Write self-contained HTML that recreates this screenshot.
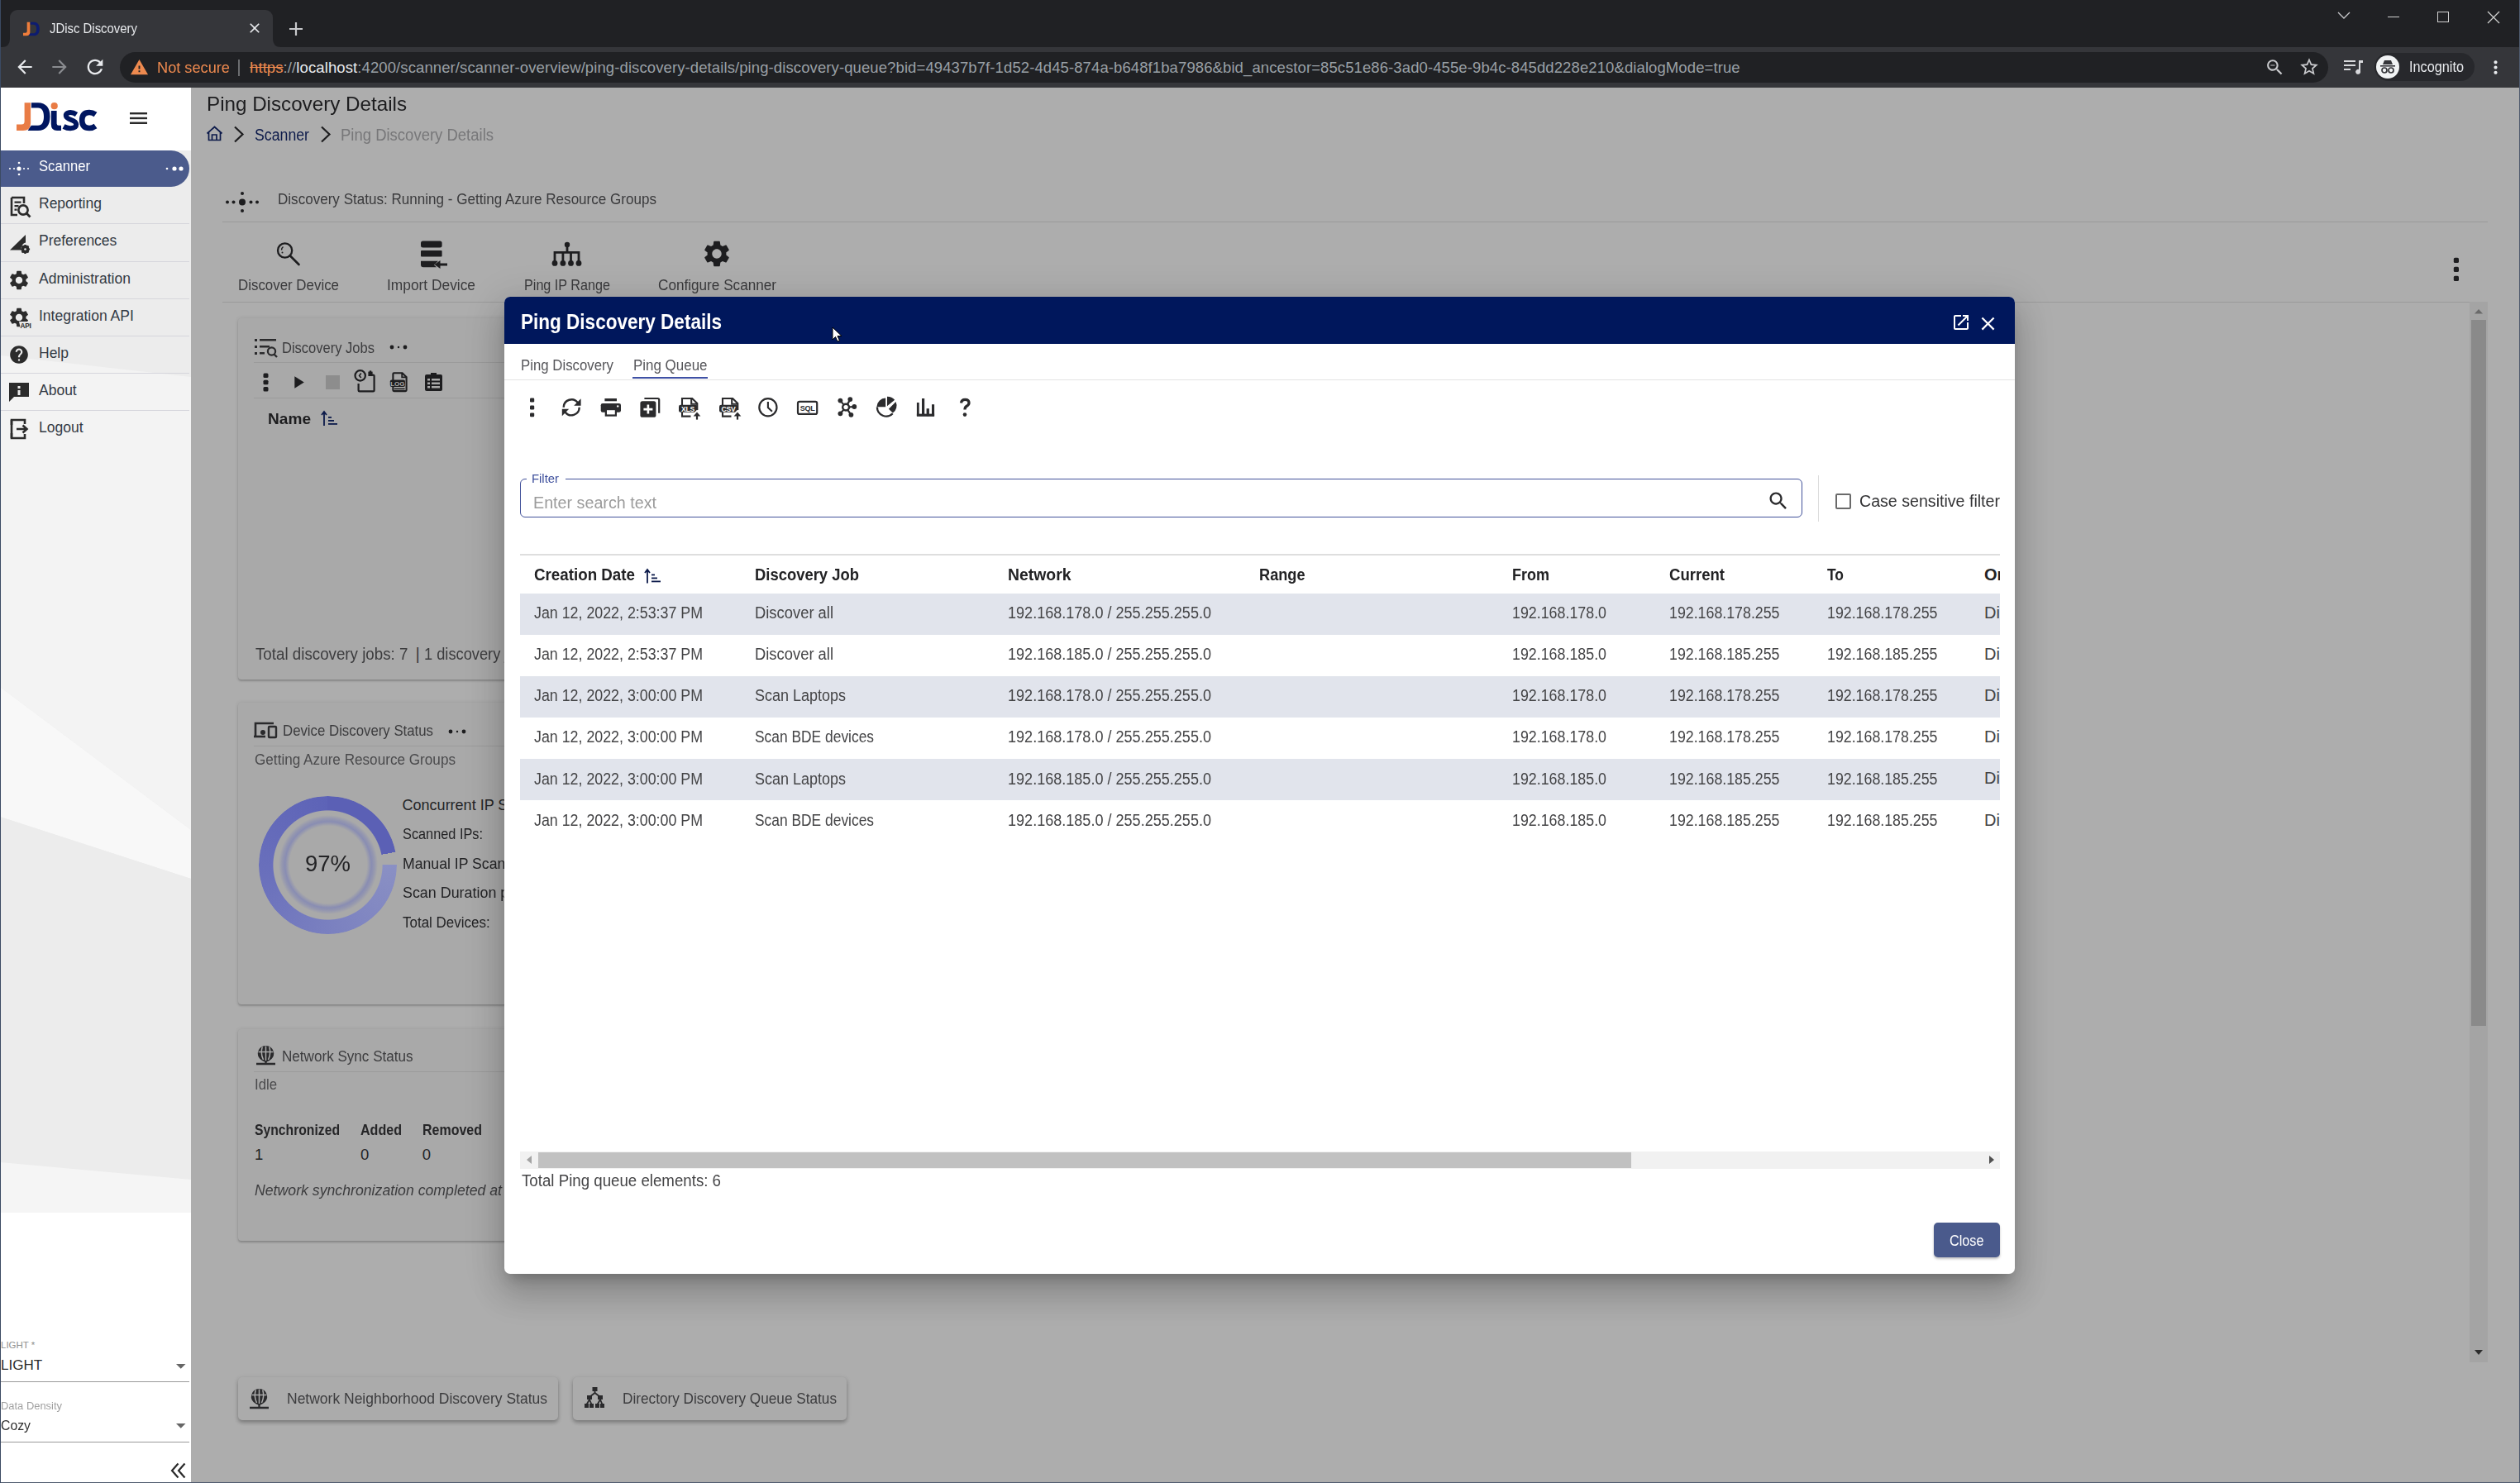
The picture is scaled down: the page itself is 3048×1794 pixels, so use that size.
<!DOCTYPE html>
<html><head><meta charset="utf-8"><title>JDisc Discovery</title>
<style>
html,body{margin:0;padding:0;}
body{width:3048px;height:1794px;overflow:hidden;position:relative;font-family:"Liberation Sans",sans-serif;background:#acacac;}
.t{position:absolute;white-space:nowrap;line-height:1;}
.a{position:absolute;}
svg.a{overflow:visible;}
</style></head><body>
<div class=a style="left:0px;top:0px;width:3048px;height:57px;background:#202124;"></div>
<div class=a style="left:0px;top:57px;width:3048px;height:49px;background:#35363a;"></div>
<div class=a style="left:12px;top:12px;width:318px;height:46px;background:#35363a;border-radius:9px 9px 0 0;"></div>
<svg class=a style="left:2px;top:47px" width="10" height="10"><path d="M0 10 Q10 10 10 0 V10Z" fill="#35363a"/></svg>
<svg class=a style="left:330px;top:47px" width="10" height="10"><path d="M10 10 Q0 10 0 0 V10Z" fill="#35363a"/></svg>
<svg class=a style="left:27px;top:25px" width="22" height="20" viewBox="18 122 45 38"><path fill="#ee7d3b" d="M29.6 124.3H37.1V149Q37.1 158 28 158H20V150.5H26Q29.6 150.5 29.6 147Z"/><path fill="#0d1c70" d="M37.900 124.3H46C56 124.3 60.5 131 60.5 141C60.5 151 56 158 46 158H33.6Q36 154 37.9 151.8H46C51 151.8 53 147 53 141C53 135 51 130.5 46 130.5H37.9Z"/></svg>
<span class=t style="left:60.0px;top:26.1px;font-size:17px;color:#e8eaed;transform:scaleX(0.8767);transform-origin:0 0;">JDisc Discovery</span>
<svg class=a style="left:298px;top:24px;" width="20" height="20" viewBox="0 0 24 24"><path fill="#e8eaed" d="M19 6.41L17.59 5 12 10.59 6.41 5 5 6.41 10.59 12 5 17.59 6.41 19 12 13.41 17.59 19 19 17.59 13.41 12z"/></svg>
<svg class=a style="left:348px;top:25px;" width="20" height="20" viewBox="0 0 20 20"><path d="M10 2V18M2 10H18" stroke="#c8c9cc" stroke-width="2.2"/></svg>
<svg class=a style="left:2826px;top:12px;" width="18" height="14" viewBox="0 0 18 14"><path d="M2 3 L9 10 L16 3" stroke="#c8c9cc" stroke-width="1.3" fill="none"/></svg>
<div class=a style="left:2888px;top:20px;width:14px;height:1px;background:#d0d0d0;"></div>
<div class=a style="left:2948px;top:14px;width:14px;height:13px;border:1.2px solid #d0d0d0;box-sizing:border-box;"></div>
<svg class=a style="left:3009px;top:14px;" width="14" height="14" viewBox="0 0 14 14"><path d="M0 0L14 14M14 0L0 14" stroke="#d0d0d0" stroke-width="1.3"/></svg>
<svg class=a style="left:17px;top:68px;" width="26" height="26" viewBox="0 0 24 24"><path fill="#e8eaed" d="M20 11H7.830l5.59-5.59L12 4l-8 8 8 8 1.41-1.41L7.83 13H20v-2z"/></svg>
<svg class=a style="left:59px;top:68px;" width="26" height="26" viewBox="0 0 24 24"><path fill="#8a8c90" d="M12 4l-1.41 1.41L16.17 11H4v2h12.17l-5.58 5.59L12 20l8-8z"/></svg>
<svg class=a style="left:101px;top:67px;" width="28" height="28" viewBox="0 0 24 24"><path fill="#e8eaed" d="M17.65 6.35C16.2 4.9 14.21 4 12 4c-4.42 0-7.99 3.58-7.990 8s3.57 8 7.99 8c3.73 0 6.84-2.55 7.73-6h-2.08c-.82 2.33-3.04 4-5.65 4-3.31 0-6-2.69-6-6s2.69-6 6-6c1.66 0 3.14.69 4.22 1.78L13 11h7V4l-2.35 2.35z"/></svg>
<div class=a style="left:145px;top:63px;width:2671px;height:37px;background:#202124;border-radius:19px;"></div>
<svg class=a style="left:157px;top:70px;" width="23" height="23" viewBox="0 0 24 24"><path fill="#ee8a4f" d="M1 21h22L12 2 1 21zm12-3h-2v-2h2v2zm0-4h-2v-4h2v4z"/></svg>
<span class=t style="left:189.5px;top:72.6px;font-size:18.5px;color:#ee8a4f;transform:scaleX(0.9836);transform-origin:0 0;">Not secure</span>
<div class=a style="left:288px;top:72px;width:1.5px;height:20px;background:#6b6d70;"></div>
<span class=t style="left:302.0px;top:72.6px;font-size:18.5px;color:#9aa0a6;letter-spacing:0.10px;"><span style="color:#ee8a4f;text-decoration:line-through">https</span><span style="color:#9aa0a6">://</span><span style="color:#e8eaed">localhost</span><span style="color:#9aa0a6">:4200/scanner/scanner-overview/ping-discovery-details/ping-discovery-queue?bid=49437b7f-1d52-4d45-874a-b648f1ba7986&amp;bid_ancestor=85c51e86-3ad0-455e-9b4c-845dd228e210&amp;dialogMode=true</span></span>
<svg class=a style="left:2739px;top:69px;" width="25" height="25" viewBox="0 0 24 24"><path fill="#c8c9cc" d="M15.5 14h-.79l-.28-.27C15.41 12.59 16 11.11 16 9.5 16 5.91 13.09 3 9.5 3S3 5.91 3 9.5 5.91 16 9.5 16c1.61 0 3.09-.59 4.23-1.57l.27.28v.79l5 4.99L20.49 19l-4.99-5zm-6 0C7.01 14 5 11.99 5 9.5S7.01 5 9.5 5 14 7.01 14 9.5 11.99 14 9.5 14zM7 9h5v1H7z"/></svg>
<svg class=a style="left:2780px;top:68px;" width="26" height="26" viewBox="0 0 24 24"><path fill="#c8c9cc" d="M22 9.24l-7.19-.62L12 2 9.19 8.63 2 9.24l5.46 4.73L5.82 21 12 17.27 18.18 21l-1.63-7.03L22 9.24zM12 15.4l-3.76 2.27 1-4.28-3.32-2.88 4.38-.38L12 6.1l1.71 4.04 4.38.38-3.32 2.88 1 4.28L12 15.4z"/></svg>
<svg class=a style="left:2833px;top:71px;" width="26" height="20" viewBox="0 0 26 20"><path d="M2 3H16M2 8H16M2 13H10" stroke="#d8d9dc" stroke-width="2"/><path d="M20 2H25V5H22V15A3 3 0 1 1 20 13Z" fill="#d8d9dc"/></svg>
<div class=a style="left:2872px;top:64px;width:121px;height:34px;background:#27282c;border-radius:17px;"></div>
<div class=a style="left:2874px;top:67px;width:28px;height:28px;background:#f1f3f4;border-radius:50%;"></div>
<svg class=a style="left:2876px;top:70px;" width="24" height="22" viewBox="0 0 24 22"><path d="M6 8H18L16 3H8Z" fill="#35363a"/><rect x="3" y="9" width="18" height="1.6" fill="#35363a"/><circle cx="8" cy="15" r="3" fill="none" stroke="#35363a" stroke-width="1.7"/><circle cx="16" cy="15" r="3" fill="none" stroke="#35363a" stroke-width="1.7"/></svg>
<span class=t style="left:2914.0px;top:71.8px;font-size:18px;color:#e8eaed;transform:scaleX(0.9033);transform-origin:0 0;">Incognito</span>
<svg class=a style="left:3006px;top:69px;" width="25" height="25" viewBox="0 0 24 24"><path fill="#e8eaed" d="M12 8c1.1 0 2-.9 2-2s-.9-2-2-2-2 .9-2 2 .9 2 2 2zm0 2c-1.1 0-2 .9-2 2s.9 2 2 2 2-.9 2-2-.9-2-2-2zm0 6c-1.1 0-2 .9-2 2s.9 2 2 2 2-.9 2-2-.9-2-2-2z"/></svg>
<div class=a style="left:0px;top:106px;width:231px;height:1688px;background:#ffffff;"></div>
<svg class=a style="left:0;top:182px" width="231" height="1285" viewBox="0 182 231 1285"><rect x="0" y="182" width="231" height="1285" fill="#ececec"/><polygon points="0,430 231,456 231,1004 0,831" fill="#f3f3f3"/><polygon points="0,831 231,1004 231,1063 0,988" fill="#f8f8f8"/><polygon points="0,988 231,1063 231,1427 0,1406" fill="#ececec"/><polygon points="0,1406 231,1427 231,1467 0,1467" fill="#f5f5f5"/></svg>
<div class=a style="left:0px;top:106px;width:1px;height:1688px;background:#3b4a63;"></div>
<svg class=a style="left:0;top:106px" width="231" height="76" viewBox="0 106 231 76"><path fill="#e97c45" d="M29.6 124.3H37.1V149Q37.1 158 28 158H20V150.5H26Q29.6 150.5 29.6 147Z"/><path fill="#001660" d="M37.9 124.3H46C56 124.3 60.5 131 60.5 141C60.5 151 56 158 46 158H33.6Q36 154 37.9 151.8H46C51 151.8 53 147 53 141C53 135 51 130.5 46 130.5H37.9Z"/><path fill="#001660" d="M61.8 133.9H68.6V149.5Q68.6 151.8 71 151.8H74V158H69Q61.8 158 61.8 150Z"/><circle cx="65.7" cy="128.2" r="4.1" fill="#e97c45"/><path fill="none" stroke="#001660" stroke-width="6" d="M92.5 138.5Q88 135.5 83.5 136.2Q79.5 137 79.8 140.2Q80.2 143 86 145Q92 147 92.2 150.5Q92.2 155 85 155.2Q81 155.2 77 153"/><path fill="none" stroke="#001660" stroke-width="6.6" d="M115.5 138.5Q112 136 108 136Q99.2 136 99.2 145.5Q99.2 155 108 155Q112 155 115.5 152.5"/></svg>
<svg class=a style="left:157px;top:136px;" width="21" height="14" viewBox="0 0 21 14"><g fill="#2a2a2a"><rect x="0" y="0" width="21" height="2.4"/><rect x="0" y="5.8" width="21" height="2.4"/><rect x="0" y="11.6" width="21" height="2.4"/></g></svg>
<div class=a style="left:1px;top:182px;width:228px;height:44px;background:#4b5b8c;border-radius:0 22px 22px 0;"></div>
<svg class=a style="left:10px;top:195px;" width="26" height="18" viewBox="0 0 26 18"><g fill="#fff"><circle cx="13" cy="9" r="2.6"/><circle cx="13" cy="2" r="1.3"/><circle cx="13" cy="16" r="1.3"/><circle cx="2" cy="9" r="1.1"/><circle cx="7" cy="9" r="1.1"/><circle cx="19" cy="9" r="1.1"/><circle cx="24" cy="9" r="1.1"/></g></svg>
<span class=t style="left:47.0px;top:192.5px;font-size:17.5px;color:#ffffff;transform:scaleX(0.9511);transform-origin:0 0;">Scanner</span>
<svg class=a style="left:199px;top:199px;" width="24" height="10" viewBox="0 0 24 10"><g fill="#fff"><circle cx="3" cy="5" r="1.3"/><circle cx="12" cy="5" r="2.6"/><circle cx="20" cy="5" r="2.6"/></g></svg>
<span class=t style="left:47.0px;top:237.5px;font-size:17.5px;color:#333a44;">Reporting</span>
<div class=a style="left:1px;top:270px;width:228px;height:1px;background:#d6d6dc;"></div>
<span class=t style="left:47.0px;top:283.0px;font-size:17.5px;color:#333a44;">Preferences</span>
<div class=a style="left:1px;top:316px;width:228px;height:1px;background:#d6d6dc;"></div>
<span class=t style="left:47.0px;top:328.5px;font-size:17.5px;color:#333a44;">Administration</span>
<div class=a style="left:1px;top:361px;width:228px;height:1px;background:#d6d6dc;"></div>
<span class=t style="left:47.0px;top:373.5px;font-size:17.5px;color:#333a44;">Integration API</span>
<div class=a style="left:1px;top:406px;width:228px;height:1px;background:#d6d6dc;"></div>
<span class=t style="left:47.0px;top:418.5px;font-size:17.5px;color:#333a44;">Help</span>
<div class=a style="left:1px;top:451px;width:228px;height:1px;background:#d6d6dc;"></div>
<span class=t style="left:47.0px;top:463.5px;font-size:17.5px;color:#333a44;">About</span>
<div class=a style="left:1px;top:496px;width:228px;height:1px;background:#d6d6dc;"></div>
<span class=t style="left:47.0px;top:508.5px;font-size:17.5px;color:#333a44;">Logout</span>
<svg class=a style="left:12px;top:237px;" width="26" height="27" viewBox="0 0 26 27"><path d="M2 2H17V9M2 2V23H9" fill="none" stroke="#2b2b2b" stroke-width="2.6"/><g fill="#2b2b2b"><rect x="5.5" y="6.5" width="8" height="2.3"/><rect x="5.5" y="11" width="5" height="2.3"/><rect x="5.5" y="15.5" width="3" height="2.3"/></g><circle cx="16" cy="17" r="5.6" fill="none" stroke="#2b2b2b" stroke-width="2.6"/><path d="M20 21L24.5 25.5" stroke="#2b2b2b" stroke-width="2.8"/></svg>
<svg class=a style="left:11px;top:282px;" width="26" height="25" viewBox="0 0 26 25"><path d="M1 20.5L20 2V11.5Q15.5 12 14 20.5Z" fill="#2b2b2b"/><g transform="translate(19.5 19.5)"><circle r="3.6" fill="none" stroke="#2b2b2b" stroke-width="2.6"/><g stroke="#2b2b2b" stroke-width="2.2"><path d="M0 -5.6V5.6M-5.6 0H5.6M-4 -4L4 4M-4 4L4 -4"/></g><circle r="1.3" fill="#eaeaea"/></g></svg>
<svg class=a style="left:9px;top:325px;" width="28" height="28" viewBox="0 0 24 24"><path fill="#2b2b2b" d="M19.14 12.94c.04-.3.06-.61.06-.94 0-.32-.02-.64-.07-.94l2.03-1.58c.18-.14.23-.41.12-.61l-1.92-3.32c-.12-.22-.37-.29-.59-.22l-2.39.96c-.5-.38-1.03-.7-1.62-.94l-.36-2.54c-.04-.24-.24-.41-.48-.41h-3.84c-.24 0-.43.17-.47.41l-.36 2.54c-.59.24-1.13.57-1.62.94l-2.390-.96c-.22-.08-.47 0-.59.22L2.74 8.87c-.12.21-.08.47.12.61l2.03 1.58c-.05.3-.09.63-.09.94s.02.64.07.94l-2.03 1.58c-.18.14-.23.41-.12.61l1.92 3.32c.12.22.37.29.59.22l2.39-.96c.5.38 1.03.7 1.62.94l.36 2.54c.05.24.24.41.48.41h3.84c.24 0 .44-.17.47-.41l.36-2.54c.59-.24 1.13-.56 1.62-.94l2.39.96c.22.08.47 0 .59-.22l1.92-3.32c.12-.22.07-.47-.12-.61l-2.01-1.58zM12 15.6c-1.98 0-3.6-1.62-3.6-3.6s1.62-3.6 3.6-3.6 3.6 1.62 3.6 3.6-1.62 3.6-3.6 3.6z"/></svg>
<svg class=a style="left:9px;top:370px;" width="30" height="28" viewBox="0 0 30 28"><g transform="scale(1.17)"><path fill="#2b2b2b" d="M19.14 12.94c.04-.3.06-.61.06-.94 0-.32-.02-.64-.07-.94l2.03-1.58c.18-.14.23-.41.12-.61l-1.92-3.32c-.12-.22-.37-.29-.59-.22l-2.39.96c-.5-.38-1.03-.7-1.62-.94l-.36-2.54c-.04-.24-.24-.41-.48-.41h-3.84c-.24 0-.43.17-.47.41l-.36 2.54c-.59.24-1.13.57-1.62.94l-2.390-.96c-.22-.08-.47 0-.59.22L2.74 8.87c-.12.21-.08.47.12.61l2.03 1.58c-.05.3-.09.63-.09.94s.02.64.07.94l-2.03 1.58c-.18.14-.23.41-.12.61l1.92 3.32c.12.22.37.29.59.22l2.39-.96c.5.38 1.03.7 1.62.94l.36 2.54c.05.24.24.41.48.41h3.84c.24 0 .44-.17.47-.41l.36-2.54c.59-.24 1.13-.56 1.62-.94l2.39.96c.22.08.47 0 .59-.22l1.92-3.32c.12-.22.07-.47-.12-.61l-2.01-1.58zM12 15.6c-1.98 0-3.6-1.62-3.6-3.6s1.62-3.6 3.6-3.6 3.6 1.62 3.6 3.6-1.62 3.6-3.6 3.6z"/></g><path d="M14 19H30V28H16Z" fill="#e9e9e9"/><text x="15.5" y="26.6" font-family="Liberation Sans" font-size="8.2" font-weight="700" fill="#2b2b2b" letter-spacing="-0.2">API</text></svg>
<svg class=a style="left:10px;top:416px;" width="26" height="26" viewBox="0 0 24 24"><path fill="#2b2b2b" d="M12 2C6.48 2 2 6.48 2 12s4.48 10 10 10 10-4.48 10-10S17.52 2 12 2zm1 17h-2v-2h2v2zm2.07-7.75l-.9.92C13.45 12.9 13 13.5 13 15h-2v-.5c0-1.1.45-2.1 1.17-2.83l1.24-1.26c.37-.36.59-.86.59-1.41 0-1.1-.9-2-2-2s-2 .9-2 2H8c0-2.21 1.79-4 4-4s4 1.79 4 4c0 .88-.36 1.68-.93 2.25z"/></svg>
<svg class=a style="left:11px;top:463px;" width="25" height="24" viewBox="0 0 25 24"><path d="M0 0H24V17H6L0 23Z" fill="#2b2b2b"/><rect x="10.5" y="4" width="3" height="3" fill="#ececec"/><rect x="10.5" y="9" width="3" height="6" fill="#ececec"/></svg>
<svg class=a style="left:12px;top:506px;" width="23" height="26" viewBox="0 0 23 26"><path d="M2 8V2H18V7M2 18V24H18V19" fill="none" stroke="#2b2b2b" stroke-width="2.6"/><path d="M2 2V24" stroke="#2b2b2b" stroke-width="2.6"/><path d="M8 13H20M15.5 8.5L20.5 13L15.5 17.5" fill="none" stroke="#2b2b2b" stroke-width="2.6"/></svg>
<div class=a style="left:0px;top:1467px;width:231px;height:327px;background:#ffffff;"></div>
<div class=a style="left:0px;top:106px;width:1px;height:1688px;background:#3b4a63;"></div>
<span class=t style="left:1.0px;top:1622.3px;font-size:11.5px;color:#8f8f8f;">LIGHT *</span>
<span class=t style="left:1.0px;top:1642.6px;font-size:17px;color:#2a2a2a;">LIGHT</span>
<svg class=a style="left:213px;top:1650px;" width="11.5" height="6" viewBox="0 0 11.5 6"><path d="M0 0H11.5L5.75 5.8Z" fill="#666"/></svg>
<div class=a style="left:1px;top:1671px;width:228px;height:1.2px;background:#9a9a9a;"></div>
<span class=t style="left:1.0px;top:1694.8px;font-size:12px;color:#a0a0a0;transform:scaleX(1.0771);transform-origin:0 0;">Data Density</span>
<span class=t style="left:1.0px;top:1715.6px;font-size:17px;color:#2e2e2e;transform:scaleX(0.9294);transform-origin:0 0;">Cozy</span>
<svg class=a style="left:213px;top:1722px;" width="11.5" height="6" viewBox="0 0 11.5 6"><path d="M0 0H11.5L5.75 5.8Z" fill="#666"/></svg>
<div class=a style="left:1px;top:1743.5px;width:228px;height:1.2px;background:#9a9a9a;"></div>
<svg class=a style="left:205px;top:1769px;" width="22" height="20" viewBox="0 0 22 20"><path d="M10.5 1.5L3 10L10.5 18.5M18.5 1.5L11 10L18.5 18.5" stroke="#2a2a2a" stroke-width="2.2" fill="none"/></svg>
<div class=a style="left:0px;top:1793px;width:3048px;height:1px;background:#4f5b6e;"></div>
<div class=a style="left:3047px;top:0px;width:1px;height:1794px;background:#4f5b6e;"></div>
<div class=a style="left:0px;top:0px;width:1px;height:1794px;background:#3b4a63;"></div>
<div class=a style="left:231px;top:106px;width:2815px;height:1686px;background:#adadad;"></div>
<span class=t style="left:250.0px;top:114.2px;font-size:24px;color:#1d1d1f;transform:scaleX(1.0079);transform-origin:0 0;">Ping Discovery Details</span>
<svg class=a style="left:249px;top:152px;" width="22" height="20" viewBox="0 0 22 20"><path d="M1.5 9.5L10.5 1.5L19.5 9.5M3.5 8V17.5H17.5V8M7.5 17.5V11H13V17.5" fill="none" stroke="#0c1a4a" stroke-width="1.7"/></svg>
<svg class=a style="left:282px;top:152px;" width="14" height="21" viewBox="0 0 14 21"><path d="M2 1.5L11.5 10.5L2 19.5" fill="none" stroke="#1d1d1f" stroke-width="2.2"/></svg>
<span class=t style="left:307.5px;top:153.5px;font-size:19.5px;color:#0c1a4a;transform:scaleX(0.9086);transform-origin:0 0;">Scanner</span>
<svg class=a style="left:387px;top:152px;" width="14" height="21" viewBox="0 0 14 21"><path d="M2 1.5L11.5 10.5L2 19.5" fill="none" stroke="#1d1d1f" stroke-width="2.2"/></svg>
<span class=t style="left:412.0px;top:153.5px;font-size:19.5px;color:#777779;transform:scaleX(0.9483);transform-origin:0 0;">Ping Discovery Details</span>
<svg class=a style="left:272px;top:231px;" width="42" height="27" viewBox="0 0 42 27"><g fill="#1d1d1f"><circle cx="21" cy="13.5" r="4"/><circle cx="21" cy="3" r="2"/><circle cx="21" cy="24" r="2"/><circle cx="3" cy="13.5" r="2"/><circle cx="10.5" cy="13.5" r="2"/><circle cx="31.5" cy="13.5" r="2"/><circle cx="39" cy="13.5" r="2"/></g></svg>
<span class=t style="left:336.0px;top:232.4px;font-size:18px;color:#3a3a3c;transform:scaleX(0.9478);transform-origin:0 0;">Discovery Status: Running - Getting Azure Resource Groups</span>
<div class=a style="left:269px;top:268px;width:2740px;height:1px;background:#9a9a9a;"></div>
<svg class=a style="left:332px;top:290px;" width="34" height="34" viewBox="0 0 34 34"><circle cx="12.6" cy="13" r="8.6" fill="none" stroke="#1d1d1f" stroke-width="2.3"/><path d="M19 19.5L29.5 30" stroke="#1d1d1f" stroke-width="2.6" stroke-linecap="round"/><path d="M10.5 8.5Q8.5 10 8.5 12.5" fill="none" stroke="#1d1d1f" stroke-width="1.5"/><circle cx="9.5" cy="15.5" r="1" fill="#1d1d1f"/></svg>
<span class=t style="left:288.0px;top:337.2px;font-size:17.5px;color:#3a3a3c;transform:scaleX(0.9649);transform-origin:0 0;">Discover Device</span>
<svg class=a style="left:508px;top:290px;" width="35" height="35" viewBox="0 0 35 35"><g fill="#1d1d1f"><rect x="1" y="1.4" width="25.6" height="8" rx="2.5"/><rect x="1" y="13" width="25.6" height="7.5" rx="1"/><path d="M1 25.7H22L17 30.5L20 33.2H4A3 3 0 0 1 1 30.2Z"/><path d="M33 28.5H24.5V25L17.5 30L24.5 35V31.5H33Z"/></g></svg>
<span class=t style="left:468.0px;top:337.2px;font-size:17.5px;color:#3a3a3c;transform:scaleX(0.9912);transform-origin:0 0;">Import Device</span>
<svg class=a style="left:667px;top:292px;" width="38" height="31" viewBox="0 0 38 31"><g fill="#1d1d1f"><circle cx="19" cy="3.9" r="3.2"/><circle cx="4" cy="26.4" r="3.4"/><circle cx="13.9" cy="26.4" r="3.4"/><circle cx="23.5" cy="26.4" r="3.4"/><circle cx="33" cy="26.4" r="3.4"/></g><path d="M19 4V13.4M4 26V13.4H33V26M13.9 13.4V26M23.5 13.4V26" fill="none" stroke="#1d1d1f" stroke-width="2.8"/></svg>
<span class=t style="left:633.6px;top:337.2px;font-size:17.5px;color:#3a3a3c;transform:scaleX(0.9241);transform-origin:0 0;">Ping IP Range</span>
<svg class=a style="left:848px;top:288px;" width="38" height="38" viewBox="0 0 24 24"><path fill="#1d1d1f" d="M19.14 12.94c.04-.3.06-.61.06-.94 0-.32-.02-.64-.07-.94l2.03-1.58c.18-.14.23-.41.12-.61l-1.92-3.32c-.12-.22-.37-.29-.59-.22l-2.39.96c-.5-.38-1.03-.7-1.62-.94l-.36-2.54c-.04-.24-.24-.41-.48-.41h-3.84c-.24 0-.43.17-.47.41l-.36 2.54c-.59.24-1.13.57-1.62.94l-2.390-.96c-.22-.08-.47 0-.59.22L2.74 8.87c-.12.21-.08.47.12.61l2.03 1.58c-.05.3-.09.63-.09.94s.02.64.07.94l-2.03 1.58c-.18.14-.23.41-.12.61l1.92 3.32c.12.22.37.29.59.22l2.39-.96c.5.38 1.03.7 1.62.94l.36 2.54c.05.24.24.41.48.41h3.84c.24 0 .44-.17.47-.41l.36-2.54c.59-.24 1.13-.56 1.62-.94l2.39.96c.22.08.47 0 .59-.22l1.92-3.32c.12-.22.07-.47-.12-.61l-2.01-1.58zM12 15.6c-1.98 0-3.6-1.62-3.6-3.6s1.62-3.6 3.6-3.6 3.6 1.62 3.6 3.6-1.62 3.6-3.6 3.6z"/></svg>
<span class=t style="left:796.0px;top:337.2px;font-size:17.5px;color:#3a3a3c;transform:scaleX(0.9800);transform-origin:0 0;">Configure Scanner</span>
<div class=a style="left:269px;top:364.5px;width:2740px;height:1px;background:#9a9a9a;"></div>
<svg class=a style="left:2967px;top:311px;" width="8" height="30" viewBox="0 0 8 30"><g fill="#1d1d1f"><rect x="0.8" y="0.8" width="6.2" height="6.2" rx="1.6"/><rect x="0.8" y="11.8" width="6.2" height="6.2" rx="1.6"/><rect x="0.8" y="22.8" width="6.2" height="6.2" rx="1.6"/></g></svg>
<div class=a style="left:2987px;top:365px;width:22px;height:1283px;background:#a4a4a4;"></div>
<div class=a style="left:2989px;top:387px;width:18px;height:854px;background:#8a8a8a;"></div>
<svg class=a style="left:2993px;top:373px;" width="10" height="7" viewBox="0 0 10 7"><path d="M0 6.5H10L5 1Z" fill="#6a6a6a"/></svg>
<svg class=a style="left:2993px;top:1633px;" width="10" height="7" viewBox="0 0 10 7"><path d="M0 0H10L5 6Z" fill="#2d2d2d"/></svg>
<div class=a style="left:288px;top:385px;width:480px;height:437px;background:#a9a9a9;border-radius:4px;box-shadow:0 2px 2px rgba(0,0,0,0.18),0 0 5px rgba(0,0,0,0.10);"></div>
<div class=a style="left:288px;top:850px;width:480px;height:365px;background:#a9a9a9;border-radius:4px;box-shadow:0 2px 2px rgba(0,0,0,0.18),0 0 5px rgba(0,0,0,0.10);"></div>
<div class=a style="left:288px;top:1245px;width:480px;height:256px;background:#a9a9a9;border-radius:4px;box-shadow:0 2px 2px rgba(0,0,0,0.18),0 0 5px rgba(0,0,0,0.10);"></div>
<svg class=a style="left:308px;top:408px;" width="30" height="26" viewBox="0 0 30 26"><g fill="#2a2a2c"><rect x="0" y="2" width="3" height="3"/><rect x="6" y="2" width="20" height="2.5"/><rect x="0" y="10" width="3" height="3"/><rect x="6" y="10" width="12" height="2.5"/><rect x="0" y="18" width="3" height="3"/><rect x="6" y="18" width="6" height="2.5"/></g><circle cx="20.5" cy="17" r="4.6" fill="none" stroke="#2a2a2c" stroke-width="2.2"/><path d="M23.5 20.5L27 24" stroke="#2a2a2c" stroke-width="2.4"/></svg>
<span class=t style="left:341.0px;top:411.9px;font-size:18.5px;color:#3c3c3e;transform:scaleX(0.8929);transform-origin:0 0;">Discovery Jobs</span>
<svg class=a style="left:470px;top:415px;" width="26" height="10" viewBox="0 0 26 10"><g fill="#1d1d1f"><circle cx="4" cy="5" r="2.4"/><circle cx="12" cy="5" r="1.2"/><circle cx="20" cy="5" r="2.4"/></g></svg>
<div class=a style="left:307px;top:438px;width:461px;height:1.2px;background:#9b9b9b;"></div>
<svg class=a style="left:318px;top:451px;" width="8" height="23" viewBox="0 0 8 23"><g fill="#1d1d1f"><rect x="0.5" y="0.5" width="6" height="5.6" rx="1.5"/><rect x="0.5" y="8.7" width="6" height="5.6" rx="1.5"/><rect x="0.5" y="16.9" width="6" height="5.6" rx="1.5"/></g></svg>
<svg class=a style="left:348px;top:450px;" width="25" height="25" viewBox="0 0 24 24"><path fill="#1d1d1f" d="M8 5v14l11-7z"/></svg>
<div class=a style="left:394px;top:454px;width:17px;height:17px;background:#8d8d8d;"></div>
<svg class=a style="left:420px;top:440px" width="80" height="40" viewBox="420 440 80 40"><circle cx="435.7" cy="454.4" r="6.2" fill="none" stroke="#1d1d1f" stroke-width="2.2"/><path d="M436.8 451.6L434.6 454.4L436.8 457" fill="none" stroke="#1d1d1f" stroke-width="1.6"/><path d="M433.6 464V472.2Q433.6 473.4 434.8 473.4H451.4Q452.6 473.4 452.6 472.2V455Q452.6 453.6 451.2 453.6H449.6" fill="none" stroke="#1d1d1f" stroke-width="2.2"/><rect x="445.4" y="449.6" width="5.2" height="5.4" fill="#1d1d1f"/><rect x="446.8" y="448.4" width="2.4" height="2" fill="#1d1d1f"/><path d="M475.4 460V452.3Q475.4 451.2 476.5 451.2H486.6L491.6 456.2V472Q491.6 473.1 490.5 473.1H476.5Q475.4 473.1 475.4 472V468" fill="none" stroke="#1d1d1f" stroke-width="2.1"/><path d="M486.2 451.4V456.4H491.4" fill="none" stroke="#1d1d1f" stroke-width="1.8"/><rect x="471.8" y="459.6" width="18.2" height="8.4" rx="2" fill="#1d1d1f"/><text x="480.9" y="466.6" font-family="Liberation Sans" font-size="8" font-weight="700" fill="#a9a9a9" text-anchor="middle">LOG</text><rect x="477" y="469.6" width="12.6" height="1.6" fill="#1d1d1f"/></svg>
<svg class=a style="left:513px;top:450px;" width="23" height="24" viewBox="0 0 23 24"><rect x="1" y="3" width="21" height="20" rx="2" fill="#1d1d1f"/><rect x="8" y="1" width="7" height="4" fill="#1d1d1f"/><g fill="#a9a9a9"><rect x="4" y="8" width="3" height="2.5"/><rect x="9" y="8" width="10" height="2.5"/><rect x="4" y="12.5" width="3" height="2.5"/><rect x="9" y="12.5" width="10" height="2.5"/><rect x="4" y="17" width="3" height="2.5"/><rect x="9" y="17" width="10" height="2.5"/></g></svg>
<div class=a style="left:307px;top:481px;width:461px;height:1.2px;background:#9b9b9b;"></div>
<span class=t style="left:324.0px;top:496.9px;font-size:19px;color:#1d1d1f;font-weight:700;transform:scaleX(1.0048);transform-origin:0 0;">Name</span>
<svg class=a style="left:388px;top:497px;" width="22" height="19" viewBox="0 0 22 19"><path d="M4 18V2M1 5L4 1L7 5" stroke="#0c1a4a" stroke-width="1.8" fill="none"/><g fill="#0c1a4a"><rect x="9" y="7" width="4" height="1.8"/><rect x="9" y="11" width="7" height="1.8"/><rect x="9" y="15" width="11" height="1.8"/></g></svg>
<span class=t style="left:309.0px;top:780.6px;font-size:20.5px;color:#3c3c3e;transform:scaleX(0.9143);transform-origin:0 0;">Total discovery jobs: 7</span>
<span class=t style="left:502.5px;top:780.6px;font-size:20.5px;color:#3c3c3e;">|</span>
<span class=t style="left:512.8px;top:780.6px;font-size:20.5px;color:#3c3c3e;transform:scaleX(0.89);transform-origin:0 0;">1 discovery job running</span>
<svg class=a style="left:307px;top:873px;" width="29" height="20" viewBox="0 0 29 20"><path d="M2 18V2H24" fill="none" stroke="#2a2a2c" stroke-width="2.6"/><path d="M0 18H14" stroke="#2a2a2c" stroke-width="2.6"/><circle cx="11" cy="13" r="3" fill="#2a2a2c"/><rect x="18" y="6" width="9" height="13" rx="1" fill="none" stroke="#2a2a2c" stroke-width="2.4"/></svg>
<span class=t style="left:341.5px;top:874.7px;font-size:18.5px;color:#3c3c3e;transform:scaleX(0.9078);transform-origin:0 0;">Device Discovery Status</span>
<svg class=a style="left:541px;top:880px;" width="26" height="10" viewBox="0 0 26 10"><g fill="#1d1d1f"><circle cx="4" cy="5" r="2.4"/><circle cx="12" cy="5" r="1.2"/><circle cx="20" cy="5" r="2.4"/></g></svg>
<div class=a style="left:307px;top:902px;width:461px;height:1.2px;background:#9b9b9b;"></div>
<span class=t style="left:308.0px;top:910.3px;font-size:18px;color:#4a4a4c;transform:scaleX(0.9524);transform-origin:0 0;">Getting Azure Resource Groups</span>
<div class=a style="left:313px;top:962.8px;width:167.4px;height:167.4px;border-radius:50%;background:conic-gradient(from 0deg,#5b60b5 0deg 79deg,rgba(0,0,0,0) 79deg 90deg,#8a90c4 90deg,#7c82c0 170deg,#6a70bc 260deg,#5d63b7 360deg);-webkit-mask:radial-gradient(circle closest-side,transparent 65.6px,#000 66.6px);mask:radial-gradient(circle closest-side,transparent 65.6px,#000 66.6px);"></div>
<div class=a style="left:336.7px;top:986.4px;width:120px;height:120px;border-radius:50%;background:radial-gradient(circle closest-side,rgba(111,118,186,0) 78%,rgba(111,118,186,0.55) 87%,rgba(111,118,186,0.35) 93%,rgba(111,118,186,0) 100%);"></div>
<span class=t style="left:369.0px;top:1030.7px;font-size:28px;color:#232325;transform:scaleX(0.9813);transform-origin:0 0;">97%</span>
<span class=t style="left:486.6px;top:964.8px;font-size:18px;color:#242426;">Concurrent IP Scans:</span>
<span class=t style="left:486.6px;top:1000.2px;font-size:18px;color:#242426;transform:scaleX(0.9059);transform-origin:0 0;">Scanned IPs:</span>
<span class=t style="left:486.6px;top:1035.7px;font-size:18px;color:#242426;transform:scaleX(0.9805);transform-origin:0 0;">Manual IP Scans:</span>
<span class=t style="left:486.6px;top:1071.1px;font-size:18px;color:#242426;transform:scaleX(0.9936);transform-origin:0 0;">Scan Duration per IP:</span>
<span class=t style="left:486.6px;top:1106.6px;font-size:18px;color:#242426;transform:scaleX(0.9434);transform-origin:0 0;">Total Devices:</span>
<svg class=a style="left:309px;top:1264px;" width="25" height="24" viewBox="0 0 25 24"><path d="M12.5 1A9.5 9.5 0 0 1 16.5 19.2L12.5 21L8.5 19.2A9.5 9.5 0 0 1 12.5 1Z" fill="#2a2a2c"/><path d="M12.5 1.5V19M3.5 8.5H21.5M8.3 2.5Q5.8 10 9.5 18M16.7 2.5Q19.2 10 15.5 18" stroke="#a9a9a9" stroke-width="1.5" fill="none"/><path d="M12.5 19V22.5M1 23H24" stroke="#2a2a2c" stroke-width="2.3"/></svg>
<span class=t style="left:341.0px;top:1268.5px;font-size:18.5px;color:#3c3c3e;transform:scaleX(0.9237);transform-origin:0 0;">Network Sync Status</span>
<div class=a style="left:307px;top:1295.5px;width:461px;height:1.2px;background:#9b9b9b;"></div>
<span class=t style="left:308.0px;top:1302.7px;font-size:18.5px;color:#4a4a4c;transform:scaleX(0.9052);transform-origin:0 0;">Idle</span>
<span class=t style="left:308.0px;top:1358.3px;font-size:18.5px;color:#262628;font-weight:700;transform:scaleX(0.8490);transform-origin:0 0;">Synchronized</span>
<span class=t style="left:436.0px;top:1358.3px;font-size:18.5px;color:#262628;font-weight:700;transform:scaleX(0.8686);transform-origin:0 0;">Added</span>
<span class=t style="left:510.7px;top:1358.3px;font-size:18.5px;color:#262628;font-weight:700;transform:scaleX(0.8645);transform-origin:0 0;">Removed</span>
<span class=t style="left:308.0px;top:1387.6px;font-size:18.5px;color:#242426;">1</span>
<span class=t style="left:436.0px;top:1387.6px;font-size:18.5px;color:#242426;">0</span>
<span class=t style="left:510.7px;top:1387.6px;font-size:18.5px;color:#242426;">0</span>
<span class=t style="left:308.4px;top:1430.7px;font-size:18.5px;color:#3c3c3e;font-style:italic;transform:scaleX(0.9565);transform-origin:0 0;">Network synchronization completed at</span>
<div class=a style="left:288px;top:1666px;width:387px;height:52px;background:#ababab;border-radius:5px;box-shadow:0 3px 4px rgba(0,0,0,0.24),0 1px 6px rgba(0,0,0,0.10);"></div>
<div class=a style="left:693px;top:1666px;width:331px;height:52px;background:#ababab;border-radius:5px;box-shadow:0 3px 4px rgba(0,0,0,0.24),0 1px 6px rgba(0,0,0,0.10);"></div>
<svg class=a style="left:301px;top:1679px;" width="25" height="26" viewBox="0 0 25 26"><path d="M12.5 1A9.5 9.5 0 0 1 16.5 19.2L12.5 21L8.5 19.2A9.5 9.5 0 0 1 12.5 1Z" fill="#2a2a2c"/><path d="M12.5 1.5V19M3.5 8.5H21.5M8.3 2.5Q5.8 10 9.5 18M16.7 2.5Q19.2 10 15.5 18" stroke="#ababab" stroke-width="1.5" fill="none"/><path d="M12.5 19V23.5M1 24H24" stroke="#2a2a2c" stroke-width="2.3"/></svg>
<span class=t style="left:347.4px;top:1683.1px;font-size:18.5px;color:#3c3c3e;transform:scaleX(0.9455);transform-origin:0 0;">Network Neighborhood Discovery Status</span>
<svg class=a style="left:707px;top:1678px;" width="25" height="26" viewBox="0 0 25 26"><g fill="#2a2a2c"><rect x="9.5" y="0" width="6" height="5"/><rect x="3" y="10" width="6" height="5"/><rect x="16" y="10" width="6" height="5"/><rect x="0" y="20" width="5" height="5"/><rect x="6" y="20" width="5" height="5"/><rect x="13" y="20" width="5" height="5"/><rect x="19" y="20" width="5" height="5"/></g><path d="M12.5 5V8M6 12L12.5 7L19 12M6 15L2.5 21M6 15L8.5 21M19 15L15.5 21M19 15L21.5 21" stroke="#2a2a2c" stroke-width="1.8" fill="none"/></svg>
<span class=t style="left:753.0px;top:1683.1px;font-size:18.5px;color:#3c3c3e;transform:scaleX(0.9295);transform-origin:0 0;">Directory Discovery Queue Status</span>
<div class=a style="left:610px;top:359px;width:1827px;height:1182px;background:#ffffff;border-radius:7px;overflow:hidden;box-shadow:0 11px 15px -7px rgba(0,0,0,0.22),0 24px 38px 3px rgba(0,0,0,0.15),0 9px 46px 8px rgba(0,0,0,0.10);"></div>
<div class=a style="left:610px;top:359px;width:1827px;height:57px;background:#00175c;border-radius:7px 7px 0 0;"></div>
<span class=t style="left:629.5px;top:376.3px;font-size:26px;color:#ffffff;font-weight:700;transform:scaleX(0.8668);transform-origin:0 0;">Ping Discovery Details</span>
<svg class=a style="left:2360px;top:378px;" width="24" height="24" viewBox="0 0 24 24"><path fill="#ffffff" d="M19 19H5V5h7V3H5c-1.11 0-2 .9-2 2v14c0 1.1.89 2 2 2h14c1.1 0 2-.9 2-2v-7h-2v7zM14 3v2h3.59l-9.83 9.83 1.41 1.41L19 6.41V10h2V3h-7z"/></svg>
<svg class=a style="left:2391px;top:378px;" width="27" height="27" viewBox="0 0 24 24"><path fill="#ffffff" d="M19 6.41L17.59 5 12 10.59 6.41 5 5 6.41 10.59 12 5 17.59 6.41 19 12 13.41 17.59 19 19 17.59 13.41 12z"/></svg>
<svg class=a style="left:1006px;top:395px;" width="12" height="19" viewBox="0 0 12 19"><path d="M1 1V16L4.5 12.5L7 18L9.5 17L7 11.5H12Z" fill="#ffffff" stroke="#000" stroke-width="1"/></svg>
<span class=t style="left:630.0px;top:432.8px;font-size:18px;color:#56565a;transform:scaleX(0.9330);transform-origin:0 0;">Ping Discovery</span>
<span class=t style="left:765.5px;top:432.8px;font-size:18px;color:#56565a;transform:scaleX(0.9413);transform-origin:0 0;">Ping Queue</span>
<div class=a style="left:765px;top:456px;width:91px;height:2px;background:#3f51a5;"></div>
<div class=a style="left:610px;top:458.5px;width:1827px;height:1.5px;background:#e4e4e4;"></div>
<svg class=a style="left:620px;top:470px" width="570" height="42" viewBox="620 470 570 42"><g fill="#2b2b2d"><rect x="641" y="481.6" width="5.2" height="4.8" rx="1.2"/><rect x="641" y="490.6" width="5.2" height="4.8" rx="1.2"/><rect x="641" y="499.4" width="5.2" height="4.8" rx="1.2"/></g><path d="M681.7 492.8A9.5 9.5 0 0 1 699 487.4M700.7 492.8A9.5 9.5 0 0 1 683.4 498.2" fill="none" stroke="#2b2b2d" stroke-width="2.4"/><path d="M702.6 482.3V490.8H694.2Z M679.8 494.8H688.2L679.8 503.3Z" fill="#2b2b2d"/><rect x="731.4" y="482" width="14.6" height="3.3" fill="#2b2b2d"/><rect x="726.7" y="488" width="24.3" height="10.7" rx="2.2" fill="#2b2b2d"/><circle cx="747.2" cy="491.4" r="1.2" fill="#fff"/><rect x="731.7" y="494.6" width="14.3" height="9.1" fill="#2b2b2d"/><rect x="734" y="496.2" width="9.8" height="5.2" fill="#fff"/><path d="M779.4 482H795.5Q797.2 482 797.2 483.7V499.8" fill="none" stroke="#2b2b2d" stroke-width="2.2"/><rect x="774.4" y="485.3" width="19" height="19.5" rx="2.6" fill="#2b2b2d"/><path d="M783.9 489.6V500.6M778.4 495.1H789.4" stroke="#fff" stroke-width="2.6"/><g transform="translate(0 0)"><path d="M825 491V482H837.2L843.3 488V496M836.2 482V488.7H843" fill="none" stroke="#2b2b2d" stroke-width="2.1"/><rect x="821" y="489.8" width="22.3" height="9" rx="2.2" fill="#2b2b2d"/><text x="832" y="497.6" font-family="Liberation Sans" font-size="8.6" font-weight="700" fill="#fff" text-anchor="middle" letter-spacing="-0.2">XLS</text><path d="M825 498.5V503.6H835.5" fill="none" stroke="#2b2b2d" stroke-width="2.1"/><path d="M843 500V508M838.6 503.2L843 498.6L847.4 503.2" fill="none" stroke="#fff" stroke-width="4"/><path d="M843 501V507.6" stroke="#2b2b2d" stroke-width="2.2"/><path d="M838.6 503.4H847.4L843 498.4Z" fill="#2b2b2d"/></g><g transform="translate(49 0)"><path d="M825 491V482H837.2L843.3 488V496M836.2 482V488.7H843" fill="none" stroke="#2b2b2d" stroke-width="2.1"/><rect x="821" y="489.8" width="22.3" height="9" rx="2.2" fill="#2b2b2d"/><text x="832" y="497.6" font-family="Liberation Sans" font-size="8.6" font-weight="700" fill="#fff" text-anchor="middle" letter-spacing="-0.2">CSV</text><path d="M825 498.5V503.6H835.5" fill="none" stroke="#2b2b2d" stroke-width="2.1"/><path d="M843 500V508M838.6 503.2L843 498.6L847.4 503.2" fill="none" stroke="#fff" stroke-width="4"/><path d="M843 501V507.6" stroke="#2b2b2d" stroke-width="2.2"/><path d="M838.6 503.4H847.4L843 498.4Z" fill="#2b2b2d"/></g><circle cx="928.9" cy="492.8" r="10.6" fill="none" stroke="#2b2b2d" stroke-width="2.2"/><path d="M928.9 486V493L933.9 497.8" fill="none" stroke="#2b2b2d" stroke-width="2.1"/><rect x="965" y="485.9" width="23.2" height="15" rx="2" fill="none" stroke="#2b2b2d" stroke-width="2.2"/><text x="976.6" y="496.6" font-family="Liberation Sans" font-size="9" font-weight="700" fill="#2b2b2d" text-anchor="middle" letter-spacing="-0.3">SQL</text><g stroke="#2b2b2d" stroke-width="2.2"><path d="M1023.1 492.6L1016.4 484.6M1023.1 492.6L1028.3 483.1M1023.1 492.6L1033.3 492M1023.1 492.6L1016.4 500.3M1023.1 492.6L1029.4 501.8"/></g><g fill="#2b2b2d"><circle cx="1016.4" cy="484.6" r="2.9"/><circle cx="1028.3" cy="483.1" r="2.9"/><circle cx="1033.3" cy="492" r="2.9"/><circle cx="1016.4" cy="500.3" r="2.9"/><circle cx="1029.4" cy="501.8" r="2.9"/></g><circle cx="1023.1" cy="492.6" r="3.9" fill="#fff" stroke="#2b2b2d" stroke-width="2.4"/><path d="M1060.9 492.6A11 11 0 0 0 1079.7 500.3" fill="none" stroke="#2b2b2d" stroke-width="2.3"/><path d="M1071.2 481.6A11 11 0 0 0 1060.4 492.3H1071.2Z" fill="#2b2b2d"/><path d="M1073 479.8A12 12 0 0 1 1082.2 483.8L1073 491.3Z" fill="#2b2b2d"/><path d="M1083.5 486A11 11 0 0 1 1079.9 499.6L1074.9 494.8Z" fill="#2b2b2d"/><g fill="#2b2b2d"><rect x="1108.9" y="500.6" width="21.2" height="3.2"/><rect x="1108.9" y="487" width="2.8" height="16"/><rect x="1115" y="482" width="3.2" height="21"/><rect x="1120.6" y="494.2" width="3.3" height="9"/><rect x="1127" y="489.2" width="3.1" height="14"/></g><path d="M1162.5 487.5Q1163 483.3 1167.3 483.3Q1172 483.3 1172 487.3Q1172 489.8 1169.3 491.3Q1167 492.6 1167 495.6" fill="none" stroke="#2b2b2d" stroke-width="3.3"/><circle cx="1167" cy="501.6" r="2.3" fill="#2b2b2d"/></svg>
<div class=a style="left:629px;top:579px;width:1550.5px;height:47px;border:1.8px solid #42529a;border-radius:6px;box-sizing:border-box;"></div>
<div class=a style="left:637px;top:574px;width:47px;height:10px;background:#ffffff;"></div>
<span class=t style="left:643.0px;top:572.1px;font-size:14px;color:#3d4f9c;transform:scaleX(1.0602);transform-origin:0 0;">Filter</span>
<span class=t style="left:644.6px;top:598.5px;font-size:19.5px;color:#9b9b9b;transform:scaleX(1.0108);transform-origin:0 0;">Enter search text</span>
<svg class=a style="left:2137px;top:592px;" width="28" height="28" viewBox="0 0 24 24"><path fill="#2b2b2d" d="M15.5 14h-.79l-.28-.27C15.41 12.59 16 11.11 16 9.5 16 5.910 13.09 3 9.5 3S3 5.91 3 9.5 5.91 16 9.5 16c1.61 0 3.09-.59 4.23-1.57l.27.28v.79l5 4.99L20.49 19l-4.99-5zm-6 0C7.01 14 5 11.99 5 9.5S7.01 5 9.5 5 14 7.01 14 9.5 11.99 14 9.5 14z"/></svg>
<div class=a style="left:2199px;top:575px;width:1.2px;height:56px;background:#dcdcdc;"></div>
<div class=a style="left:2220px;top:597px;width:19px;height:19px;border:2px solid #6a6a6a;border-radius:2px;box-sizing:border-box;"></div>
<span class=t style="left:2248.7px;top:596.1px;font-size:20px;color:#333335;transform:scaleX(0.9804);transform-origin:0 0;">Case sensitive filter</span>
<div class=a style="left:629px;top:670px;width:1790px;height:1.5px;background:#dedede;"></div>
<span class=t style="left:646.2px;top:685.1px;font-size:20px;color:#222224;font-weight:700;transform:scaleX(0.9382);transform-origin:0 0;">Creation Date</span>
<svg class=a style="left:779px;top:688px;" width="22" height="18" viewBox="0 0 22 18"><path d="M4 17.5V2M1 5L4 1L7 5" stroke="#0c1a4a" stroke-width="1.8" fill="none"/><g fill="#0c1a4a"><rect x="9" y="6.5" width="4" height="1.8"/><rect x="9" y="10.5" width="7" height="1.8"/><rect x="9" y="14.5" width="11" height="1.8"/></g></svg>
<span class=t style="left:913.0px;top:685.1px;font-size:20px;color:#222224;font-weight:700;transform:scaleX(0.9215);transform-origin:0 0;">Discovery Job</span>
<span class=t style="left:1218.6px;top:685.1px;font-size:20px;color:#222224;font-weight:700;transform:scaleX(0.9695);transform-origin:0 0;">Network</span>
<span class=t style="left:1523.0px;top:685.1px;font-size:20px;color:#222224;font-weight:700;transform:scaleX(0.9096);transform-origin:0 0;">Range</span>
<span class=t style="left:1828.5px;top:685.1px;font-size:20px;color:#222224;font-weight:700;transform:scaleX(0.9000);transform-origin:0 0;">From</span>
<span class=t style="left:2019.0px;top:685.1px;font-size:20px;color:#222224;font-weight:700;transform:scaleX(0.9275);transform-origin:0 0;">Current</span>
<span class=t style="left:2209.5px;top:685.1px;font-size:20px;color:#222224;font-weight:700;transform:scaleX(0.8713);transform-origin:0 0;">To</span>
<div class=a style="left:2400px;top:680px;width:19px;height:30px;overflow:hidden">
<span class=t style="left:0.0px;top:5.1px;font-size:20px;color:#222224;font-weight:700;">Or</span>
</div>
<div class=a style="left:629px;top:717.5px;width:1790px;height:50.2px;background:#e1e4ec;"></div>
<span class=t style="left:646.0px;top:730.7px;font-size:20px;color:#444446;transform:scaleX(0.8906);transform-origin:0 0;">Jan 12, 2022, 2:53:37 PM</span>
<span class=t style="left:913.0px;top:730.7px;font-size:20px;color:#444446;transform:scaleX(0.9191);transform-origin:0 0;">Discover all</span>
<span class=t style="left:1218.6px;top:730.7px;font-size:20px;color:#444446;transform:scaleX(0.9028);transform-origin:0 0;">192.168.178.0 / 255.255.255.0</span>
<span class=t style="left:1828.5px;top:730.7px;font-size:20px;color:#444446;transform:scaleX(0.8913);transform-origin:0 0;">192.168.178.0</span>
<span class=t style="left:2019.0px;top:730.7px;font-size:20px;color:#444446;transform:scaleX(0.8891);transform-origin:0 0;">192.168.178.255</span>
<span class=t style="left:2209.5px;top:730.7px;font-size:20px;color:#444446;transform:scaleX(0.8891);transform-origin:0 0;">192.168.178.255</span>
<div class=a style="left:2400px;top:717.5px;width:19px;height:50px;overflow:hidden">
<span class=t style="left:0.0px;top:13.2px;font-size:20px;color:#444446;">Discovered</span>
</div>
<span class=t style="left:646.0px;top:780.9px;font-size:20px;color:#444446;transform:scaleX(0.8906);transform-origin:0 0;">Jan 12, 2022, 2:53:37 PM</span>
<span class=t style="left:913.0px;top:780.9px;font-size:20px;color:#444446;transform:scaleX(0.9191);transform-origin:0 0;">Discover all</span>
<span class=t style="left:1218.6px;top:780.9px;font-size:20px;color:#444446;transform:scaleX(0.9028);transform-origin:0 0;">192.168.185.0 / 255.255.255.0</span>
<span class=t style="left:1828.5px;top:780.9px;font-size:20px;color:#444446;transform:scaleX(0.8913);transform-origin:0 0;">192.168.185.0</span>
<span class=t style="left:2019.0px;top:780.9px;font-size:20px;color:#444446;transform:scaleX(0.8891);transform-origin:0 0;">192.168.185.255</span>
<span class=t style="left:2209.5px;top:780.9px;font-size:20px;color:#444446;transform:scaleX(0.8891);transform-origin:0 0;">192.168.185.255</span>
<div class=a style="left:2400px;top:767.7px;width:19px;height:50px;overflow:hidden">
<span class=t style="left:0.0px;top:13.2px;font-size:20px;color:#444446;">Discovered</span>
</div>
<div class=a style="left:629px;top:817.9px;width:1790px;height:50.2px;background:#e1e4ec;"></div>
<span class=t style="left:646.0px;top:831.1px;font-size:20px;color:#444446;transform:scaleX(0.8906);transform-origin:0 0;">Jan 12, 2022, 3:00:00 PM</span>
<span class=t style="left:913.0px;top:831.1px;font-size:20px;color:#444446;transform:scaleX(0.8992);transform-origin:0 0;">Scan Laptops</span>
<span class=t style="left:1218.6px;top:831.1px;font-size:20px;color:#444446;transform:scaleX(0.9028);transform-origin:0 0;">192.168.178.0 / 255.255.255.0</span>
<span class=t style="left:1828.5px;top:831.1px;font-size:20px;color:#444446;transform:scaleX(0.8913);transform-origin:0 0;">192.168.178.0</span>
<span class=t style="left:2019.0px;top:831.1px;font-size:20px;color:#444446;transform:scaleX(0.8891);transform-origin:0 0;">192.168.178.255</span>
<span class=t style="left:2209.5px;top:831.1px;font-size:20px;color:#444446;transform:scaleX(0.8891);transform-origin:0 0;">192.168.178.255</span>
<div class=a style="left:2400px;top:817.9px;width:19px;height:50px;overflow:hidden">
<span class=t style="left:0.0px;top:13.2px;font-size:20px;color:#444446;">Discovered</span>
</div>
<span class=t style="left:646.0px;top:881.3px;font-size:20px;color:#444446;transform:scaleX(0.8906);transform-origin:0 0;">Jan 12, 2022, 3:00:00 PM</span>
<span class=t style="left:913.0px;top:881.3px;font-size:20px;color:#444446;transform:scaleX(0.8694);transform-origin:0 0;">Scan BDE devices</span>
<span class=t style="left:1218.6px;top:881.3px;font-size:20px;color:#444446;transform:scaleX(0.9028);transform-origin:0 0;">192.168.178.0 / 255.255.255.0</span>
<span class=t style="left:1828.5px;top:881.3px;font-size:20px;color:#444446;transform:scaleX(0.8913);transform-origin:0 0;">192.168.178.0</span>
<span class=t style="left:2019.0px;top:881.3px;font-size:20px;color:#444446;transform:scaleX(0.8891);transform-origin:0 0;">192.168.178.255</span>
<span class=t style="left:2209.5px;top:881.3px;font-size:20px;color:#444446;transform:scaleX(0.8891);transform-origin:0 0;">192.168.178.255</span>
<div class=a style="left:2400px;top:868.1px;width:19px;height:50px;overflow:hidden">
<span class=t style="left:0.0px;top:13.2px;font-size:20px;color:#444446;">Discovered</span>
</div>
<div class=a style="left:629px;top:918.3px;width:1790px;height:50.2px;background:#e1e4ec;"></div>
<span class=t style="left:646.0px;top:931.5px;font-size:20px;color:#444446;transform:scaleX(0.8906);transform-origin:0 0;">Jan 12, 2022, 3:00:00 PM</span>
<span class=t style="left:913.0px;top:931.5px;font-size:20px;color:#444446;transform:scaleX(0.8992);transform-origin:0 0;">Scan Laptops</span>
<span class=t style="left:1218.6px;top:931.5px;font-size:20px;color:#444446;transform:scaleX(0.9028);transform-origin:0 0;">192.168.185.0 / 255.255.255.0</span>
<span class=t style="left:1828.5px;top:931.5px;font-size:20px;color:#444446;transform:scaleX(0.8913);transform-origin:0 0;">192.168.185.0</span>
<span class=t style="left:2019.0px;top:931.5px;font-size:20px;color:#444446;transform:scaleX(0.8891);transform-origin:0 0;">192.168.185.255</span>
<span class=t style="left:2209.5px;top:931.5px;font-size:20px;color:#444446;transform:scaleX(0.8891);transform-origin:0 0;">192.168.185.255</span>
<div class=a style="left:2400px;top:918.3px;width:19px;height:50px;overflow:hidden">
<span class=t style="left:0.0px;top:13.2px;font-size:20px;color:#444446;">Discovered</span>
</div>
<span class=t style="left:646.0px;top:981.7px;font-size:20px;color:#444446;transform:scaleX(0.8906);transform-origin:0 0;">Jan 12, 2022, 3:00:00 PM</span>
<span class=t style="left:913.0px;top:981.7px;font-size:20px;color:#444446;transform:scaleX(0.8694);transform-origin:0 0;">Scan BDE devices</span>
<span class=t style="left:1218.6px;top:981.7px;font-size:20px;color:#444446;transform:scaleX(0.9028);transform-origin:0 0;">192.168.185.0 / 255.255.255.0</span>
<span class=t style="left:1828.5px;top:981.7px;font-size:20px;color:#444446;transform:scaleX(0.8913);transform-origin:0 0;">192.168.185.0</span>
<span class=t style="left:2019.0px;top:981.7px;font-size:20px;color:#444446;transform:scaleX(0.8891);transform-origin:0 0;">192.168.185.255</span>
<span class=t style="left:2209.5px;top:981.7px;font-size:20px;color:#444446;transform:scaleX(0.8891);transform-origin:0 0;">192.168.185.255</span>
<div class=a style="left:2400px;top:968.5px;width:19px;height:50px;overflow:hidden">
<span class=t style="left:0.0px;top:13.2px;font-size:20px;color:#444446;">Discovered</span>
</div>
<div class=a style="left:629px;top:1393px;width:1790px;height:21px;background:#f1f1f1;"></div>
<div class=a style="left:651px;top:1394px;width:1322px;height:19px;background:#c1c1c1;"></div>
<svg class=a style="left:636px;top:1398px;" width="8" height="11" viewBox="0 0 8 11"><path d="M7 0V10L1 5Z" fill="#a3a3a3"/></svg>
<svg class=a style="left:2405px;top:1398px;" width="8" height="11" viewBox="0 0 8 11"><path d="M1 0V10L7 5Z" fill="#505050"/></svg>
<span class=t style="left:630.8px;top:1418.1px;font-size:20px;color:#444446;transform:scaleX(0.9343);transform-origin:0 0;">Total Ping queue elements: 6</span>
<div class=a style="left:2339px;top:1479px;width:80px;height:42px;background:#4a5a8c;border-radius:5px;box-shadow:0 2px 3px rgba(0,0,0,0.25);"></div>
<span class=t style="left:2358.0px;top:1491.8px;font-size:18px;color:#ffffff;transform:scaleX(0.8994);transform-origin:0 0;">Close</span>
</body></html>
